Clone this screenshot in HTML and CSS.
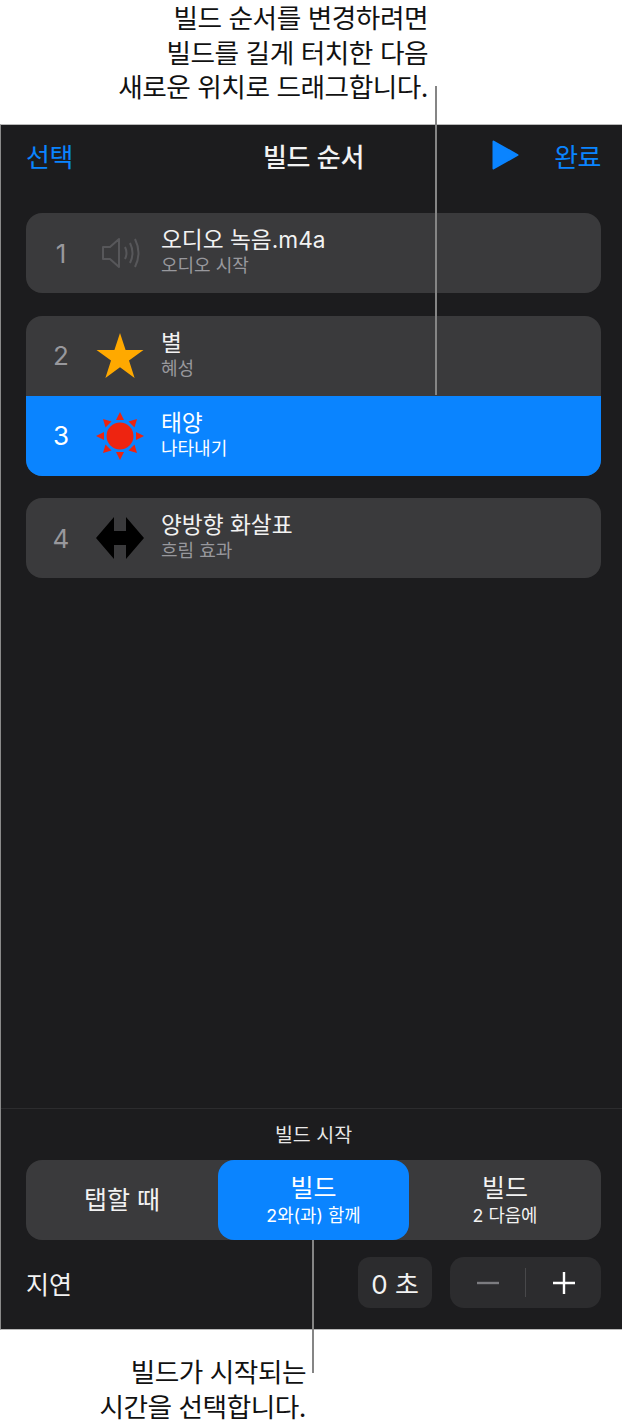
FILE: index.html
```html
<!DOCTYPE html>
<html lang="ko">
<head>
<meta charset="utf-8">
<title>빌드 순서</title>
<link rel="stylesheet" href="styles.css">
</head>
<body>

<div class="page">

<div class="captionTop">
	<p class="captionText">빌드 순서를 변경하려면<br>빌드를 길게 터치한 다음<br>새로운 위치로 드래그합니다.</p>
</div>

<div class="panel">

	<div class="navBar">
		<span class="navLink">선택</span>
		<span class="navTitle">빌드 순서</span>
		<div class="navRight">
			<svg class="playIcon" width="28" height="30" viewBox="0 0 28 30"><path d="M2.5 1.5 L26.5 15 L2.5 28.5 Z" fill="#0a84ff" stroke="#0a84ff" stroke-width="2" stroke-linejoin="round"/></svg>
			<span class="navLink">완료</span>
		</div>
	</div>

	<div class="buildList">

		<div class="buildGroup">
			<div class="buildRow">
				<span class="buildNum">1</span>
				<div class="buildIcon">
					<svg width="48" height="34" viewBox="0 0 48 34" fill="none" stroke="#57575a" stroke-width="2"><path d="M7 11 H14 L23 3 V31 L14 23 H7 Z" stroke-linejoin="round"/><path d="M29 11 Q32 17 29 23"/><path d="M34 7 Q39 17 34 27"/><path d="M39 3 Q46 17 39 31"/></svg>
				</div>
				<div class="buildText">
					<span class="buildName">오디오 녹음.m4a</span>
					<span class="buildEffect">오디오 시작</span>
				</div>
			</div>
		</div>

		<div class="buildGroup">
			<div class="buildRow">
				<span class="buildNum">2</span>
				<div class="buildIcon">
					<svg width="48" height="46" viewBox="0 0 48 46"><path d="M24 0 L29.6 17 L47.5 17 L33 27.5 L38.6 45 L24 34.2 L9.4 45 L15 27.5 L0.5 17 L18.4 17 Z" fill="#ffa900"/></svg>
				</div>
				<div class="buildText">
					<span class="buildName">별</span>
					<span class="buildEffect">혜성</span>
				</div>
			</div>
			<div class="buildRow selectedRow">
				<span class="buildNum">3</span>
				<div class="buildIcon">
					<svg width="48" height="48" viewBox="0 0 48 48" fill="#ee2410"><circle cx="24" cy="24" r="13.5"/><path d="M24 0 L28 8 H20 Z"/><path d="M24 48 L28 40 H20 Z"/><path d="M0 24 L8 20 V28 Z"/><path d="M48 24 L40 20 V28 Z"/><path d="M7 7 L15.5 9.5 L9.5 15.5 Z"/><path d="M41 7 L38.5 15.5 L32.5 9.5 Z"/><path d="M7 41 L9.5 32.5 L15.5 38.5 Z"/><path d="M41 41 L32.5 38.5 L38.5 32.5 Z"/></svg>
				</div>
				<div class="buildText">
					<span class="buildName">태양</span>
					<span class="buildEffect">나타내기</span>
				</div>
			</div>
		</div>

		<div class="buildGroup">
			<div class="buildRow">
				<span class="buildNum">4</span>
				<div class="buildIcon">
					<svg width="48" height="42" viewBox="0 0 48 42"><path d="M0 21 L18 0 V14 H30 V0 L48 21 L30 42 V28 H18 V42 Z" fill="#000"/></svg>
				</div>
				<div class="buildText">
					<span class="buildName">양방향 화살표</span>
					<span class="buildEffect">흐림 효과</span>
				</div>
			</div>
		</div>

	</div>

	<div class="startPanel">
		<p class="startTitle">빌드 시작</p>

		<div class="segments">
			<div class="segment"><span class="segmentMain">탭할 때</span></div>
			<div class="segment segmentActive"><span class="segmentMain">빌드</span><span class="segmentSub">2와(과) 함께</span></div>
			<div class="segment"><span class="segmentMain">빌드</span><span class="segmentSub">2 다음에</span></div>
		</div>

		<div class="delayRow">
			<span class="delayLabel">지연</span>
			<span class="delayValue">0 초</span>
			<div class="stepper">
				<span class="stepBtn"><svg width="22" height="22" viewBox="0 0 22 22"><path d="M0 11 H22" stroke="#7c7c80" stroke-width="2.4"/></svg></span>
				<span class="stepDivider"></span>
				<span class="stepBtn"><svg width="22" height="22" viewBox="0 0 22 22"><path d="M0 11 H22 M11 0 V22" stroke="#fff" stroke-width="2.4"/></svg></span>
			</div>
		</div>
	</div>

</div>

<div class="captionBottom">
	<p class="captionText">빌드가 시작되는<br>시간을 선택합니다.</p>
</div>

<!-- callout lines sit over the panel -->
<div class="calloutLine lineTop"></div>
<div class="calloutLine lineBottom"></div>

</div>

</body>
</html>
```

FILE: styles.css
```css
html, body {
	margin: 0;
	padding: 0;
	background: #fff;
}

body {
	font-family: Inter, "Noto Sans CJK KR", sans-serif;
}

.page {
	position: relative;
	width: 622px;
	height: 1428px;
	overflow: hidden;
}

.captionTop {
	box-sizing: border-box;
	height: 124px;
	width: 428px;
	padding-top: 1px;
}

.captionBottom {
	width: 306px;
	padding-top: 25px;
}

.captionText {
	margin: 0;
	text-align: right;
	font-size: 26.7px;
	line-height: 34.5px;
	letter-spacing: -0.5px;
	color: #111;
}

.panel {
	display: flex;
	flex-direction: column;
	box-sizing: border-box;
	height: 1206px;
	background: #1c1c1e;
	border-top: 1px solid #b9b9b9;
	border-bottom: 1px solid #b9b9b9;
	border-left: 1px solid #8a8a8a;
	padding-left: 25px;
	padding-right: 21px;
}

.navBar {
	display: flex;
	align-items: center;
	justify-content: space-between;
	position: relative;
	height: 60px;
}

.navLink {
	font-size: 26px;
	letter-spacing: -0.5px;
	color: #0a84ff;
}

.navTitle {
	position: absolute;
	left: 0;
	right: 0;
	text-align: center;
	font-size: 26px;
	font-weight: 500;
	letter-spacing: -0.3px;
	color: #f2f2f2;
}

.navRight {
	display: flex;
	align-items: center;
	gap: 35px;
	position: relative;
}

.buildList {
	flex: 1;
	display: flex;
	flex-direction: column;
	gap: 22.5px;
	padding-top: 28px;
}

.buildGroup {
	border-radius: 16px;
	overflow: hidden;
	background: #3a3a3c;
}

.buildRow {
	display: flex;
	align-items: center;
	height: 80px;
}

.selectedRow {
	background: #0a84ff;
}

.buildNum {
	width: 70px;
	text-align: center;
	font-size: 26px;
	color: #98989d;
}

.selectedRow .buildNum {
	color: #fff;
}

.buildIcon {
	display: flex;
	justify-content: center;
	align-items: center;
	width: 48px;
	margin-right: 17px;
}

.buildText {
	display: flex;
	flex-direction: column;
	padding-bottom: 2px;
}

.buildName {
	font-size: 22.7px;
	line-height: 28px;
	color: #f2f2f2;
}

.buildEffect {
	font-size: 18px;
	line-height: 24px;
	color: #98989d;
}

.selectedRow .buildName,
.selectedRow .buildEffect {
	color: #fff;
}

.startPanel {
	margin-left: -25px;
	margin-right: -21px;
	padding: 0 21px 21px 25px;
	border-top: 1px solid #2c2c2e;
}

.startTitle {
	margin: 0;
	height: 51px;
	line-height: 53px;
	text-align: center;
	font-size: 19.5px;
	color: #e8e8e8;
}

.segments {
	display: grid;
	grid-template-columns: 192px 191px 192px;
	height: 80px;
	background: #3a3a3c;
	border-radius: 16px;
}

.segment {
	display: flex;
	flex-direction: column;
	align-items: center;
	justify-content: center;
	color: #f2f2f2;
	border-radius: 16px;
}

.segmentActive {
	background: #0a84ff;
	color: #fff;
}

.segmentMain {
	font-size: 25px;
	line-height: 32px;
}

.segmentSub {
	font-size: 17.8px;
	line-height: 24px;
}

.delayRow {
	display: flex;
	align-items: center;
	height: 51px;
	margin-top: 17px;
}

.delayLabel {
	flex: 1;
	font-size: 25px;
	color: #f2f2f2;
}

.delayValue {
	display: flex;
	align-items: center;
	justify-content: center;
	width: 74px;
	height: 51px;
	margin-right: 18px;
	border-radius: 12px;
	background: #2c2c2e;
	font-size: 26px;
	color: #f2f2f2;
}

.stepper {
	display: flex;
	align-items: center;
	width: 151px;
	height: 51px;
	border-radius: 14px;
	background: #2c2c2e;
}

.stepBtn {
	flex: 1;
	display: flex;
	align-items: center;
	justify-content: center;
}

.stepDivider {
	width: 1px;
	height: 29px;
	background: #48484a;
}

.calloutLine {
	position: absolute;
	width: 2px;
	background: #858585;
}

.lineTop {
	left: 435px;
	top: 86px;
	height: 309px;
}

.lineBottom {
	left: 312px;
	top: 1240px;
	height: 133px;
}
```
